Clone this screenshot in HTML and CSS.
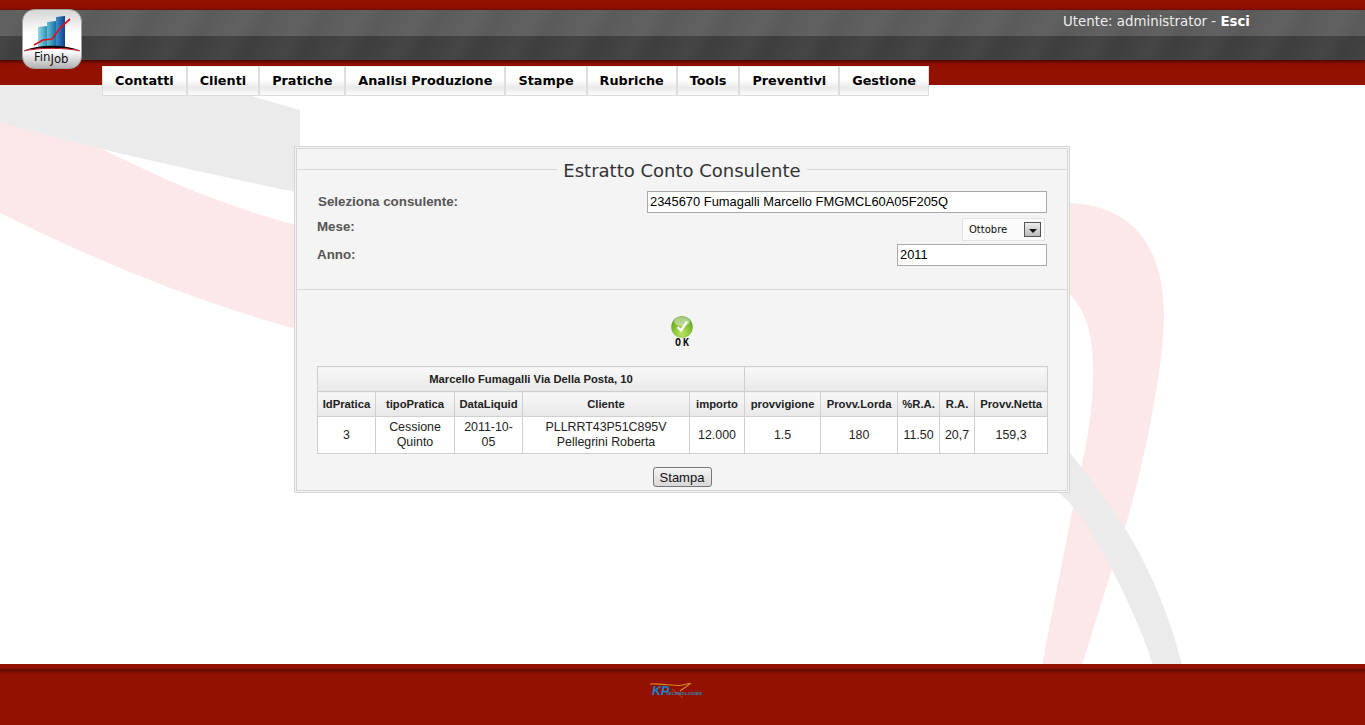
FILE: index.html
```html
<!DOCTYPE html>
<html lang="it">
<head>
<meta charset="utf-8">
<title>Estratto Conto Consulente</title>
<link rel="stylesheet" href="styles.css">
</head>
<body>
<svg class="swoosh" viewBox="0 0 1365 725" width="1365" height="725" aria-hidden="true">
  <path fill="#fce8e8" d="M0 118 L100 148 C160 178 220 205 300 226 L300 330 C200 303 100 263 0 213 Z"/>
  <path fill="#ebebeb" d="M0 85 L215 85 L255 97 L300 110 L300 193 C200 172 100 150 0 123 Z"/>
  <path fill="#fce8e8" d="M1060 203 L1070 203 C1115 205 1164 228 1164 317 C1164 370 1140 480 1125 527 L1082 665 L1042 665 L1073 507 C1085 450 1093 420 1093 370 C1093 330 1085 305 1060 285 Z"/>
  <path fill="#ebebeb" d="M1060 445 L1070 453 C1100 490 1125 525 1143 560 C1160 595 1172 625 1182 665 L1153 665 C1140 625 1125 595 1107 560 C1095 540 1085 520 1073 507 C1068 500 1062 495 1057 492 Z"/>
</svg>

<header class="top">
  <div class="band">
    <div class="user">Utente: administrator - <b>Esci</b></div>
  </div>
  <div class="logo">
    <svg viewBox="0 0 60 60" width="60" height="60" aria-hidden="true">
      <defs>
        <linearGradient id="lg" x1="0" y1="0" x2="0" y2="1"><stop offset="0" stop-color="#d4d4d4"/><stop offset=".4" stop-color="#fff"/><stop offset=".7" stop-color="#fff"/><stop offset="1" stop-color="#b0b0b0"/></linearGradient>
        <linearGradient id="b1" x1="0" y1="0" x2="1" y2="0"><stop offset="0" stop-color="#8fdbe8"/><stop offset="1" stop-color="#2f8fb0"/></linearGradient>
        <linearGradient id="b2" x1="0" y1="0" x2="1" y2="0"><stop offset="0" stop-color="#63bfd8"/><stop offset="1" stop-color="#1c6fa0"/></linearGradient>
        <linearGradient id="b3" x1="0" y1="0" x2="1" y2="0"><stop offset="0" stop-color="#3a8fd0"/><stop offset="1" stop-color="#123f86"/></linearGradient>
      </defs>
      <rect x=".5" y=".5" width="59" height="59" rx="12" fill="url(#lg)" stroke="#a0a0a0"/>
      <path d="M16 18 L25 17 V38 H16Z" fill="url(#b1)"/>
      <path d="M25 13 L34 12 V38 H25Z" fill="url(#b2)"/>
      <path d="M34 8 L43 7 V38 H34Z" fill="url(#b3)"/>
      <path d="M2 41.5 C16 35 44 35 58 41.5 C44 38.5 16 38.5 2 41.5Z" fill="#1a0508"/>
      <path d="M2 42 C16 38.5 44 38.5 58 42" fill="none" stroke="#d0061a" stroke-width=".9"/>
      <path d="M12 36 L21 31 L30 30 L38 19 L48 10" fill="none" stroke="#e2101e" stroke-width="1.7"/>
    </svg>
    <span class="logo-fin">Fin<span class="logo-job">Job</span></span>
  </div>
  <nav class="menu">
    <a>Contatti</a><a>Clienti</a><a>Pratiche</a><a>Analisi Produzione</a><a>Stampe</a><a>Rubriche</a><a>Tools</a><a>Preventivi</a><a>Gestione</a>
  </nav>
</header>

<main class="content">
  <section class="panel">
    <div class="legend"><span>Estratto Conto Consulente</span></div>
    <div class="form">
      <div class="row"><label class="lab-wide">Seleziona consulente:</label><span class="field field-long">2345670 Fumagalli Marcello FMGMCL60A05F205Q</span></div>
      <div class="row row-select"><label class="lab-mese">Mese:</label>
        <span class="select">Ottobre<i class="arrow"></i></span>
      </div>
      <div class="row row-year"><label>Anno:</label><span class="field field-short">2011</span></div>
    </div>
    <div class="rule"></div>
    <div class="ok">
      <svg viewBox="0 0 22 22" width="22" height="22" aria-hidden="true">
        <defs><radialGradient id="g" cx=".5" cy=".8" r=".8"><stop offset="0" stop-color="#bce562"/><stop offset=".6" stop-color="#7cbc2e"/><stop offset="1" stop-color="#5f9c22"/></radialGradient></defs>
        <circle cx="11" cy="11" r="10.8" fill="url(#g)"/>
        <ellipse cx="11" cy="5.5" rx="8" ry="4.5" fill="#fff" opacity=".45"/>
        <path d="M6.5 11 L10 14.5 L16 5.5" fill="none" stroke="#fff" stroke-width="2.4"/>
      </svg>
      <span class="ok-label">OK</span>
    </div>
    <table class="grid">
      <colgroup>
        <col class="c1"><col class="c2"><col class="c3"><col class="c4"><col class="c5"><col class="c6"><col class="c7"><col class="c8"><col class="c9"><col class="c10">
      </colgroup>
      <thead>
        <tr class="head-top"><th colspan="5">Marcello Fumagalli Via Della Posta, 10</th><th colspan="5"></th></tr>
        <tr><th>IdPratica</th><th>tipoPratica</th><th>DataLiquid</th><th>Cliente</th><th>importo</th><th>provvigione</th><th>Provv.Lorda</th><th>%R.A.</th><th>R.A.</th><th>Provv.Netta</th></tr>
      </thead>
      <tbody>
        <tr><td>3</td><td>Cessione Quinto</td><td>2011-10-05</td><td>PLLRRT43P51C895V Pellegrini Roberta</td><td>12.000</td><td>1.5</td><td>180</td><td>11.50</td><td>20,7</td><td>159,3</td></tr>
      </tbody>
    </table>
    <div class="actions"><button type="button" class="btn">Stampa</button></div>
  </section>
</main>

<footer class="foot">
  <div class="kp">
    <svg viewBox="0 0 56 16" width="56" height="16" aria-hidden="true">
      <path d="M0 1 C8 0 24 3 30 2.5 C34 2 37 1 41 0 C37 3 33 6 30 8" fill="none" stroke="#d8861c" stroke-width="1.1"/>
      <path d="M22 6 L33 15" stroke="#b5541c" stroke-width=".8"/>
    </svg>
    <span class="kp-big">KP</span><span class="kp-small">TECHNOLOGIES</span>
  </div>
</footer>
</body>
</html>
```
FILE: styles.css
```css
html, body { margin: 0; padding: 0; height: 100%; }
body {
  position: relative;
  width: 1365px;
  height: 725px;
  overflow: hidden;
  background: #fff;
  display: flex;
  flex-direction: column;
  font-family: "Liberation Sans", Arial, sans-serif;
}
.swoosh { position: absolute; left: 0; top: 0; z-index: 0; }

.top {
  position: relative;
  z-index: 2;
  height: 85px;
  background: #921100;
  flex: none;
}
.band {
  position: absolute;
  left: 0; right: 0; top: 10px;
  height: 50px;
  background:
    repeating-linear-gradient(120deg, rgba(255,255,255,.012) 0, rgba(255,255,255,.03) 16px, rgba(0,0,0,.02) 34px, rgba(255,255,255,.012) 50px),
    linear-gradient(#5c5c5c 0, #5c5c5c 26px, #3f3f3f 26px, #404040 100%);
  box-shadow: 0 1px 3px 1px #4a0800;
}
.user {
  position: absolute;
  left: 1063px;
  top: 3px;
  font: 13.35px/17px "DejaVu Sans", sans-serif;
  color: #eee;
  white-space: nowrap;
}
.user b { color: #fff; }

.logo {
  position: absolute;
  left: 22px;
  top: 9px;
  width: 60px;
  height: 60px;
}
.logo svg { display: block; }
.logo-fin {
  position: absolute;
  left: 12px;
  top: 40px;
  font: 13px/15px "DejaVu Sans Condensed", "DejaVu Sans", sans-serif;
  color: #111;
  white-space: nowrap;
}
.logo-job { position: relative; top: 2px; }

.menu {
  position: absolute;
  left: 102px;
  top: 66px;
  display: flex;
  height: 30px;
}
.menu a {
  padding: 0 12px;
  border: 1px solid #ddd;
  border-top-color: #eee;
  box-sizing: border-box;
  height: 30px;
  background: linear-gradient(#fff 0, #fff 45%, #e9e9e9 75%, #fbfbfb 100%);
  font: bold 12.8px/28px "DejaVu Sans", sans-serif;
  color: #000;
  white-space: nowrap;
}

.content {
  position: relative;
  z-index: 1;
  flex: 1;
  display: flex;
  justify-content: center;
  align-items: flex-start;
  padding-top: 61px;
  padding-right: 1px;
}
.panel {
  width: 770px;
  height: 341px;
  box-sizing: content-box;
  background: #f4f4f4;
  border: 3px double #d6d6d6;
  display: flex;
  flex-direction: column;
}
.legend {
  height: 20px;
  flex: none;
  position: relative;
  display: flex;
  justify-content: center;
  border-bottom: 1px solid #d9d9d9;
}
.legend span {
  font: 18px/22px "DejaVu Sans", sans-serif;
  color: #333;
  background: #f4f4f4;
  padding: 0 6px;
  height: 22px;
  position: relative;
  top: 11px;
}
.form { height: 119px; box-sizing: border-box; padding: 21px 20px 0 20px; flex: none; }
.row { display: flex; justify-content: space-between; align-items: flex-start; }
.row label { font: bold 13.33px/16px "Liberation Sans", sans-serif; color: #555; margin-top: 3px; }
.row .lab-mese { margin-top: 1px; }
.lab-wide { padding-left: 1px; }
.row-select { margin-top: 5px; height: 23px; }
.row-year { margin-top: 3px; }
.field {
  box-sizing: border-box;
  height: 22px;
  border: 1px solid #a9a9a9;
  background: #fff;
  font: 12.9px/20px "Liberation Sans", sans-serif;
  color: #000;
  padding-left: 2px;
  white-space: nowrap;
}
.field-long { width: 400px; }
.field-short { width: 150px; }
.select {
  box-sizing: border-box;
  width: 83px;
  height: 23px;
  margin-right: 2px;
  border: 1px solid #e2e2e2;
  background: #fbfbfb;
  font: 10px/21px "DejaVu Sans", sans-serif;
  color: #111;
  padding-left: 6px;
  position: relative;
}
.arrow {
  position: absolute;
  right: 3px;
  top: 3px;
  width: 17px;
  height: 15px;
  box-sizing: border-box;
  border: 1px solid #555;
  background: linear-gradient(#eee, #bbb);
}
.arrow::after {
  content: "";
  position: absolute;
  left: 4px;
  top: 6px;
  border: 4px solid transparent;
  border-top-color: #111;
  border-bottom-width: 0;
}
.rule { height: 1px; background: #d9d9d9; flex: none; }
.ok {
  height: 76px;
  flex: none;
  box-sizing: border-box;
  padding-top: 26px;
  display: flex;
  flex-direction: column;
  align-items: center;
}
.ok svg { display: block; }
.ok-label { font: bold 10px/9px "DejaVu Sans Mono", monospace; color: #111; letter-spacing: 2px; margin-right: -2px; }
.grid {
  border-collapse: collapse;
  table-layout: fixed;
  width: 730px;
  margin-left: 20px;
  background: #fff;
  flex: none;
}
.c1 { width: 58px; } .c2 { width: 79px; } .c3 { width: 68px; } .c4 { width: 167px; } .c5 { width: 55px; }
.c6 { width: 76px; } .c7 { width: 77px; } .c8 { width: 42px; } .c9 { width: 35px; } .c10 { width: 73px; }
.grid th, .grid td { border: 1px solid #cfcfcf; text-align: center; padding: 0; }
.grid th {
  height: 24px;
  background: linear-gradient(#f8f8f8, #e8e8e8);
  font: bold 11.25px/13px "Liberation Sans", sans-serif;
  color: #222;
  white-space: nowrap;
}
.grid td {
  height: 36px;
  font: 12.4px/15px "Liberation Sans", sans-serif;
  color: #222;
  padding: 0 3px;
}
.actions { display: flex; justify-content: center; padding-top: 13px; }
.btn {
  width: 59px;
  height: 20px;
  padding: 0;
  border: 1px solid #777;
  border-radius: 3px;
  background: linear-gradient(#f4f4f4, #d8d8d8);
  font: 13px/17px "Liberation Sans", sans-serif;
  color: #111;
}

.foot {
  position: relative;
  z-index: 1;
  flex: none;
  height: 61px;
  background: #921100;
}
.foot::before {
  content: "";
  position: absolute;
  left: 0; right: 0; top: 5px;
  height: 5px;
  background: linear-gradient(#5a0c00, #921100);
}
.kp {
  position: absolute;
  left: 650px;
  top: 19px;
  width: 56px;
  height: 16px;
}
.kp svg { position: absolute; left: 0; top: 0; }
.kp-big {
  position: absolute;
  left: 2px;
  top: 2px;
  font: italic bold 12.5px/13px "Liberation Sans", sans-serif;
  color: #0a86d0;
}
.kp-small {
  position: absolute;
  left: 16px;
  top: 8px;
  font: bold 4px/5px "Liberation Sans", sans-serif;
  color: #1a98c8;
  letter-spacing: .35px;
}
```
